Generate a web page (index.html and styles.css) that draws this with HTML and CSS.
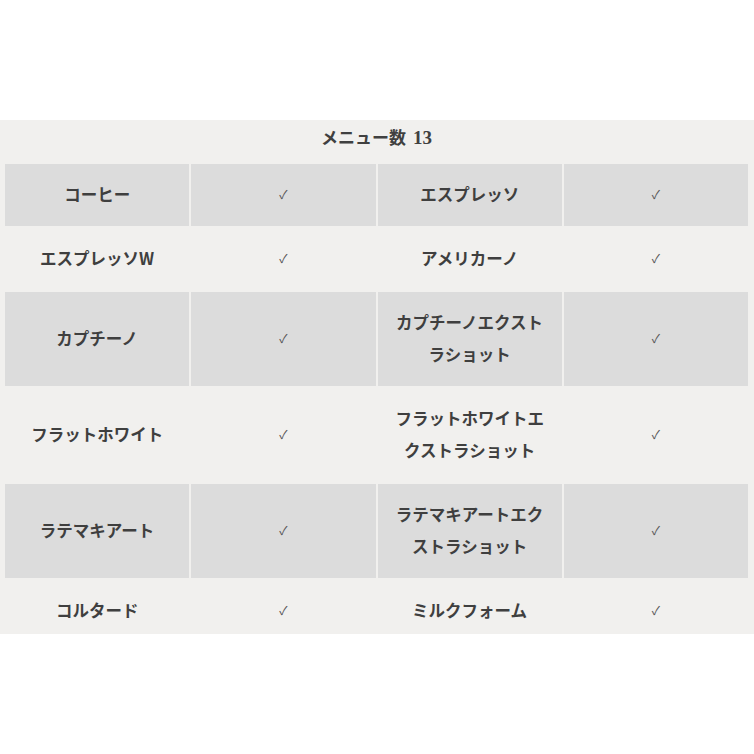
FILE: index.html
```html
<!DOCTYPE html>
<html lang="ja">
<head>
<meta charset="utf-8">
<link rel="stylesheet" href="styles.css">
</head>
<body>
<div class="wrap">
<table class="menu">
<caption class="menu-cap">メニュー数 <span class="num">13</span></caption>
<tbody>
<tr class="row-gray"><th>コーヒー</th><td>✓</td><th>エスプレッソ</th><td>✓</td></tr>
<tr><th>エスプレッソW</th><td>✓</td><th>アメリカーノ</th><td>✓</td></tr>
<tr class="row-gray"><th>カプチーノ</th><td>✓</td><th>カプチーノエクスト<br>ラショット</th><td>✓</td></tr>
<tr><th>フラットホワイト</th><td>✓</td><th>フラットホワイトエ<br>クストラショット</th><td>✓</td></tr>
<tr class="row-gray"><th>ラテマキアート</th><td>✓</td><th>ラテマキアートエク<br>ストラショット</th><td>✓</td></tr>
<tr><th>コルタード</th><td>✓</td><th>ミルクフォーム</th><td>✓</td></tr>
</tbody>
</table>
</div>
</body>
</html>
```
FILE: styles.css
```css
html, body {
  margin: 0;
  padding: 0;
  background: #ffffff;
}
.wrap {
  margin-top: 120px;
  width: 754px;
  height: 514px;
  overflow: hidden;
  background: #f1f0ee;
}
.menu {
  margin-left: 3px;
  width: 747px;
  border-collapse: separate;
  border-spacing: 2px;
  table-layout: fixed;
  color: #3f3f3f;
  font-family: "Noto Sans CJK JP", sans-serif;
}
.menu-cap {
  font-family: "Noto Sans CJK JP", sans-serif;
  font-weight: bold;
  font-size: 17px;
  line-height: 32px;
  padding: 1px 0 8px;
  color: #404040;
  text-align: center;
  word-spacing: 3px;
}
.menu-cap .num {
  font-family: "Liberation Serif", serif;
  font-size: 19px;
}
.menu th,
.menu td {
  padding: 14px 0 16px;
  line-height: 32px;
  text-align: center;
  vertical-align: middle;
}
.menu th {
  font-size: 16.5px;
  font-weight: bold;
}
.menu td {
  font-size: 12px;
  color: #555555;
}
.row-gray th,
.row-gray td {
  background: #dcdcdc;
}
```
